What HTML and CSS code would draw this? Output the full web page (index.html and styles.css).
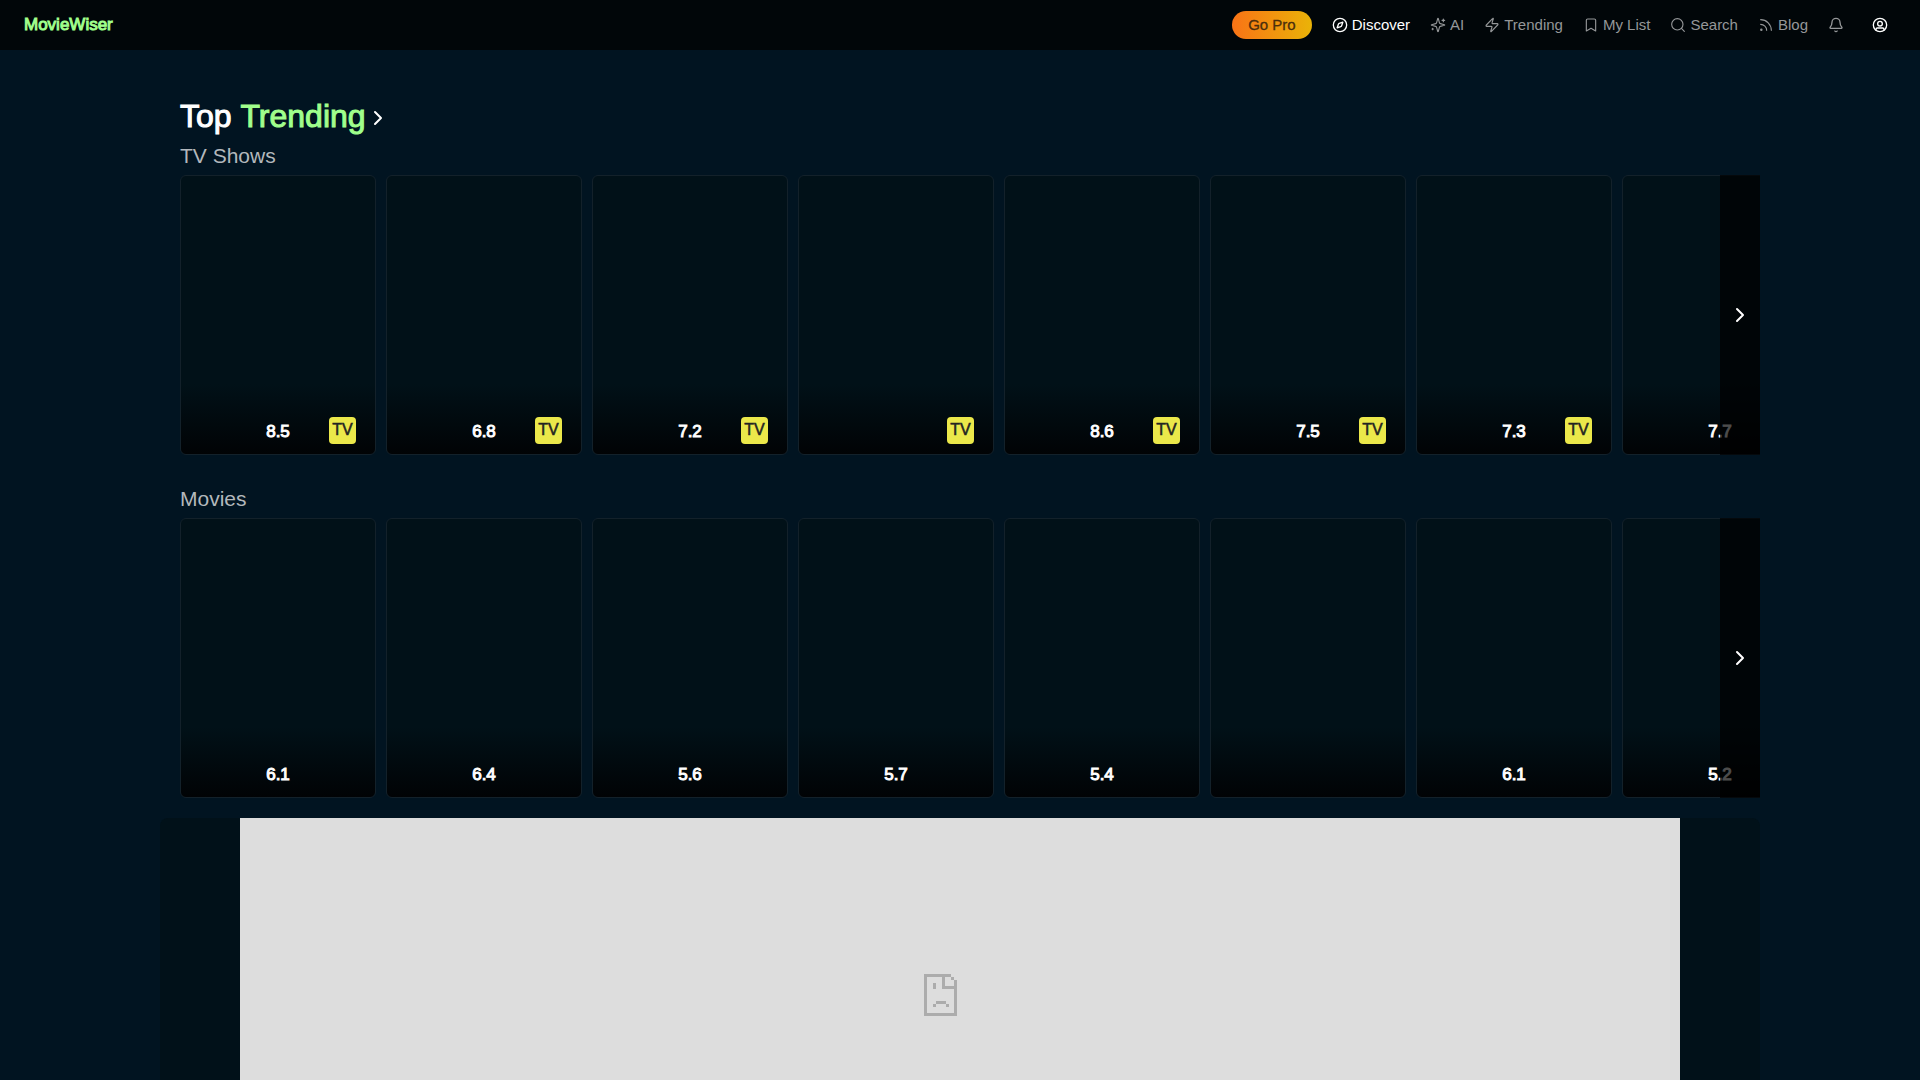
FILE: index.html
```html
<!DOCTYPE html>
<html lang="en">
<head>
    <meta charset="UTF-8">
    <meta name="viewport" content="width=device-width, initial-scale=1.0">
    <title>MovieWiser</title>
    <link rel="stylesheet" href="styles.css">
</head>
<body>
    <header class="header">
        <a href="#" class="logo">MovieWiser</a>
        <nav class="nav">
            <a href="#" class="go-pro">Go Pro</a>
            <a href="#" class="nav-link active">
                <svg class="icon" viewBox="0 0 24 24"><circle cx="12" cy="12" r="10"/><path d="m16.24 7.76-1.804 5.411a2 2 0 0 1-1.265 1.265L7.76 16.24l1.804-5.411a2 2 0 0 1 1.265-1.265z"/></svg>
                Discover
            </a>
            <a href="#" class="nav-link">
                <svg class="icon" viewBox="0 0 24 24"><path d="M9.937 15.5A2 2 0 0 0 8.5 14.063l-6.135-1.582a.5.5 0 0 1 0-.962L8.5 9.936A2 2 0 0 0 9.937 8.5l1.582-6.135a.5.5 0 0 1 .963 0L14.063 8.5A2 2 0 0 0 15.5 9.937l6.135 1.581a.5.5 0 0 1 0 .964L15.5 14.063a2 2 0 0 0-1.437 1.437l-1.582 6.135a.5.5 0 0 1-.963 0z"/><path d="M20 3v4M22 5h-4M4 17v2M5 18H3"/></svg>
                AI
            </a>
            <a href="#" class="nav-link">
                <svg class="icon" viewBox="0 0 24 24"><path d="M4 14a1 1 0 0 1-.78-1.63l9.9-10.2a.5.5 0 0 1 .86.46l-1.92 6.02A1 1 0 0 0 13 10h7a1 1 0 0 1 .78 1.63l-9.9 10.2a.5.5 0 0 1-.86-.46l1.92-6.02A1 1 0 0 0 11 14z"/></svg>
                Trending
            </a>
            <a href="#" class="nav-link">
                <svg class="icon" viewBox="0 0 24 24"><path d="m19 21-7-4-7 4V5a2 2 0 0 1 2-2h10a2 2 0 0 1 2 2v16z"/></svg>
                My List
            </a>
            <a href="#" class="nav-link">
                <svg class="icon" viewBox="0 0 24 24"><circle cx="11" cy="11" r="8.5"/><path d="m21.5 21.5-4.3-4.3"/></svg>
                Search
            </a>
            <a href="#" class="nav-link">
                <svg class="icon" viewBox="0 0 24 24"><path d="M4 11a9 9 0 0 1 9 9"/><path d="M4 4a16 16 0 0 1 16 16"/><circle cx="5" cy="19" r="1"/></svg>
                Blog
            </a>
            <button type="button" class="icon-button" aria-label="Notifications">
                <svg class="icon" viewBox="0 0 24 24"><path d="M10.268 21a2 2 0 0 0 3.464 0"/><path d="M3.262 15.326A1 1 0 0 0 4 17h16a1 1 0 0 0 .74-1.673C19.41 13.956 18 12.499 18 8A6 6 0 0 0 6 8c0 4.499-1.411 5.956-2.738 7.326"/></svg>
            </button>
            <button type="button" class="icon-button account" aria-label="Account">
                <svg class="icon" viewBox="0 0 24 24"><circle cx="12" cy="12" r="10"/><circle cx="12" cy="10" r="3.5"/><path d="M6 20v-1.5a2 2 0 0 1 2-2h8a2 2 0 0 1 2 2V20"/></svg>
            </button>
        </nav>
    </header>

    <main class="container">
        <h1 class="title">
            <a href="#">Top <span class="accent">Trending</span>
                <svg class="chevron" viewBox="0 0 24 24"><path d="m9 18 6-6-6-6"/></svg>
            </a>
        </h1>

        <section class="section">
            <h2 class="subtitle">TV Shows</h2>
            <div class="slider">
                <div class="cards">
                    <a href="#" class="card"><span class="rating">8.5</span><span class="badge">TV</span></a>
                    <a href="#" class="card"><span class="rating">6.8</span><span class="badge">TV</span></a>
                    <a href="#" class="card"><span class="rating">7.2</span><span class="badge">TV</span></a>
                    <a href="#" class="card"><span class="badge">TV</span></a>
                    <a href="#" class="card"><span class="rating">8.6</span><span class="badge">TV</span></a>
                    <a href="#" class="card"><span class="rating">7.5</span><span class="badge">TV</span></a>
                    <a href="#" class="card"><span class="rating">7.3</span><span class="badge">TV</span></a>
                    <a href="#" class="card"><span class="rating">7.7</span></a>
                </div>
                <button type="button" class="next" aria-label="Next TV shows">
                    <svg class="chevron" viewBox="0 0 24 24"><path d="m9 18 6-6-6-6"/></svg>
                </button>
            </div>
        </section>

        <section class="section">
            <h2 class="subtitle">Movies</h2>
            <div class="slider">
                <div class="cards">
                    <a href="#" class="card"><span class="rating">6.1</span></a>
                    <a href="#" class="card"><span class="rating">6.4</span></a>
                    <a href="#" class="card"><span class="rating">5.6</span></a>
                    <a href="#" class="card"><span class="rating">5.7</span></a>
                    <a href="#" class="card"><span class="rating">5.4</span></a>
                    <a href="#" class="card" aria-label="Not rated"></a>
                    <a href="#" class="card"><span class="rating">6.1</span></a>
                    <a href="#" class="card"><span class="rating">5.2</span></a>
                </div>
                <button type="button" class="next" aria-label="Next movies">
                    <svg class="chevron" viewBox="0 0 24 24"><path d="m9 18 6-6-6-6"/></svg>
                </button>
            </div>
        </section>

        <section class="trailer">
            <div class="player">
                <svg class="sad-page" viewBox="0 0 33 42" shape-rendering="crispEdges">
                    <path d="M0 0h27v3H0zM0 0h3v42H0zM0 39h33v3H0zM30 6h3v36h-3zM18 0h3v15h-3zM18 12h15v3H18zM27 3h3v3h-3z"/>
                    <path d="M9 9h3v6H9zM12 27h10v3H12zM9 30h3v3H9zM22 30h3v3h-3z"/>
                </svg>
            </div>
        </section>
    </main>
</body>
</html>
```

FILE: styles.css
```css
* {
    box-sizing: border-box;
}
body {
    display: flex;
    flex-direction: column;
    margin: 0;
    height: 100vh;
    font-family: "Liberation Sans", Arial, sans-serif;
    background-color: #011421;
    color: #fff;
}
a {
    color: inherit;
    text-decoration: none;
}
button {
    border: 0;
    padding: 0;
    background: none;
    color: inherit;
    cursor: pointer;
}
svg {
    display: block;
    flex-shrink: 0;
}

/* header */
.header {
    display: flex;
    flex-shrink: 0;
    justify-content: space-between;
    align-items: center;
    height: 50px;
    padding: 0 32px 0 24px;
    background-color: #010609;
}
.logo {
    font-size: 17px;
    color: #a0ff8c;
    -webkit-text-stroke: 1px #a0ff8c;
}
.nav {
    display: flex;
    align-items: center;
    gap: 20px;
    font-size: 15px;
    color: #959799;
}
.go-pro {
    padding: 0 16px;
    line-height: 28px;
    border-radius: 14px;
    background: linear-gradient(to right, #f97316, #eab308);
    color: #4a2e0c;
    -webkit-text-stroke: 0.3px #4a2e0c;
}
.nav-link {
    display: flex;
    align-items: center;
    gap: 4px;
    line-height: 16px;
}
.active,
.account {
    color: #fff;
}
.account {
    margin-left: 8px;
}
.icon {
    width: 16px;
    height: 16px;
    fill: none;
    stroke: currentColor;
    stroke-width: 2;
    stroke-linecap: round;
    stroke-linejoin: round;
}
.nav-link:not(.active) .icon {
    stroke-width: 1.7;
}

/* trending */
.container {
    display: flex;
    flex: 1;
    flex-direction: column;
    width: calc(100% - 320px);
    max-width: 1600px;
    margin: 0 auto;
    padding-top: 46px;
}
.title {
    margin: 0 0 0 20px;
    font-size: 32px;
    font-weight: normal;
    line-height: 40px;
    -webkit-text-stroke: 1px currentColor;
}
.title a {
    display: flex;
    align-items: center;
    white-space: pre;
}
.title .chevron {
    margin-top: 4px;
}
.accent {
    color: #a0ff8c;
}
.chevron {
    width: 24px;
    height: 24px;
    fill: none;
    stroke: #fff;
    stroke-width: 2;
    stroke-linecap: round;
    stroke-linejoin: round;
}
.section {
    padding-left: 20px;
    margin-bottom: 20px;
}
.title + .section {
    margin-bottom: 24px;
}
.subtitle {
    margin: 0;
    font-size: 21px;
    font-weight: normal;
    line-height: 39px;
    color: #b3b8bc;
}
.slider {
    position: relative;
    overflow: hidden;
}
.cards {
    display: flex;
    gap: 10px;
}
.card {
    display: grid;
    grid-template-columns: 1fr auto 1fr;
    align-items: end;
    flex: 0 0 196px;
    height: 280px;
    padding: 0 19px 10px;
    border: 1px solid #13212a;
    border-radius: 6px;
    background: linear-gradient(to top, #010305, #011118 70px);
}
.rating {
    grid-column: 2;
    font-size: 17px;
    line-height: 25px;
    -webkit-text-stroke: 1px #fff;
}
.badge {
    grid-column: 3;
    justify-self: end;
    width: 27px;
    height: 27px;
    border-radius: 4px;
    background-color: #ebe84a;
    color: #222;
    font-size: 16px;
    line-height: 25px;
    text-align: center;
    -webkit-text-stroke: 0.5px #222;
}
.next {
    position: absolute;
    top: 0;
    right: 0;
    bottom: 0;
    display: flex;
    align-items: center;
    justify-content: center;
    width: 40px;
    background-color: rgba(0, 0, 0, 0.7);
}

/* trailer */
.trailer {
    display: flex;
    flex: 1;
    border-radius: 8px 8px 0 0;
    background-color: #011119;
}
.player {
    display: flex;
    justify-content: center;
    width: 90%;
    margin: 0 auto;
    padding: 156px 40px 0 0;
    background-color: #ddd;
}
.sad-page {
    width: 33px;
    height: 42px;
    fill: #acacac;
}
```
